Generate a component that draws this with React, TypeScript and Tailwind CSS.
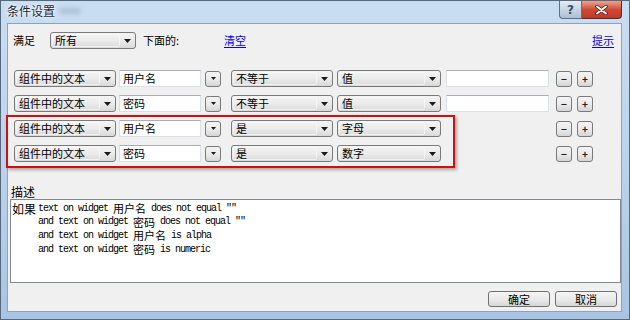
import React from "react";

const ui = "font-['Noto_Sans_CJK_SC','Liberation_Sans',sans-serif]";

const Arrow = ({ small }: { small?: boolean }) => (
  <svg width={small ? 5 : 7} height={small ? 3 : 4} viewBox="0 0 7 4" className="shrink-0">
    <path d="M0 0h7L3.5 4z" fill="#1a1a1a" />
  </svg>
);

const Combo = ({ text, w }: { text: string; w: string }) => (
  <div
    className={`${w} h-[17px] shrink-0 rounded-[3px] border border-[#7a7a7a] bg-gradient-to-b from-[#f4f4f4] via-[#ebebeb] to-[#d9d9d9] p-[1px] flex items-center`}
  >
    <div className="flex-1 h-full rounded-[2px] border border-[#fafafa]/70 flex items-center pl-[2px] text-[11px] leading-none text-black">
      {text}
    </div>
    <div className="w-[14px] flex justify-center">
      <Arrow />
    </div>
  </div>
);

const TextBox = ({ text, w }: { text?: string; w: string }) => (
  <div
    className={`${w} h-[17px] shrink-0 bg-white border border-[#dbdfe6] border-t-[#abadb3] flex items-center pl-[3px] text-[11px] leading-none text-black`}
  >
    {text}
  </div>
);

const SmallBtn = ({ children, w = "w-[16px]" }: { children: React.ReactNode; w?: string }) => (
  <div
    className={`${w} h-[16px] shrink-0 rounded-[3px] border border-[#7a7a7a] bg-gradient-to-b from-[#f4f4f4] via-[#ebebeb] to-[#d5d5d5] flex items-center justify-center text-[10px] font-bold leading-none text-[#222]`}
  >
    {children}
  </div>
);

const rows = [
  { field: "用户名", op: "不等于", val: "值", input: true },
  { field: "密码", op: "不等于", val: "值", input: true },
  { field: "用户名", op: "是", val: "字母", input: false },
  { field: "密码", op: "是", val: "数字", input: false },
];

const descLines = [
  ["text on widget", "用户名", 'does not equal ""'],
  ["and text on widget", "密码", 'does not equal ""'],
  ["and text on widget", "用户名", "is alpha"],
  ["and text on widget", "密码", "is numeric"],
];

const mono = "font-['Liberation_Mono',monospace] text-[10px] tracking-[-1px] leading-none";

export default function App() {
  return (
    <div className={`${ui} relative w-[630px] h-[320px] overflow-hidden flex flex-col bg-gradient-to-b from-[#c9ddf2] via-[#bcd3ec] to-[#a9c4e3] border border-[#58687c]`}>
      {/* title bar */}
      <div className="h-[22px] shrink-0 flex items-start">
        <div className="pl-[6px] pt-[3px] text-[12px] leading-[14px] text-[#1c2a3a] [text-shadow:0_0_6px_#ffffff,0_0_3px_#ffffff]">
          条件设置
        </div>
        <div className="mt-[7px] ml-[4px] w-[22px] h-[6px] rounded-full bg-[#9fb2c6]/60 blur-[2px]" />
        <div className="flex-1" />
        <div className="w-[23px] h-[18px] rounded-bl-[4px] border border-t-0 border-[#5d6f85] bg-gradient-to-b from-[#e3ecf5] via-[#c6d5e4] to-[#aebfd2] flex items-center justify-center text-[12px] font-bold leading-none text-[#3c4d63] font-['DejaVu_Sans',sans-serif]">
          ?
        </div>
        <div className="w-[40px] h-[18px] mr-[7px] rounded-br-[4px] border border-t-0 border-l-0 border-[#5d2a22] bg-gradient-to-b from-[#e8a493] via-[#cf4a33] to-[#c0392b] flex items-center justify-center">
          <svg width="13" height="10" viewBox="0 0 13 10">
            <path d="M2 1.5l9 7M11 1.5l-9 7" stroke="#3a1a14" strokeWidth="3.4" strokeLinecap="round" />
            <path d="M2 1.5l9 7M11 1.5l-9 7" stroke="#ffffff" strokeWidth="2" strokeLinecap="round" />
          </svg>
        </div>
      </div>

      {/* client area */}
      <div className="flex-1 ml-[6px] mr-[7px] mb-[7px] border border-[#8ea3bb] bg-[#f0f0f0] flex flex-col">
        {/* header row */}
        <div className="mt-[8px] h-[17px] flex items-center text-[11px] leading-none text-black">
          <span className="ml-[5px] w-[37px]">满足</span>
          <Combo text="所有" w="w-[86px]" />
          <span className="ml-[7px] w-[81px]">下面的:</span>
          <span className="text-[#0000ee] underline underline-offset-2">清空</span>
          <div className="flex-1" />
          <span className="mr-[7px] text-[#0000ee] underline underline-offset-2">提示</span>
        </div>

        {/* condition rows */}
        <div className="mt-[21px] ml-[6px] flex flex-col gap-[8px]">
          {rows.map((r, i) => (
            <div key={i} className="h-[17px] flex items-center">
              <Combo text="组件中的文本" w="w-[102px]" />
              <div className="w-[3px]" />
              <TextBox text={r.field} w="w-[82px]" />
              <div className="w-[4px]" />
              <SmallBtn>
                <Arrow small />
              </SmallBtn>
              <div className="w-[10px]" />
              <Combo text={r.op} w="w-[102px]" />
              <div className="w-[4px]" />
              <Combo text={r.val} w="w-[104px]" />
              <div className="w-[5px]" />
              {r.input ? <TextBox w="w-[103px]" /> : <div className="w-[103px] shrink-0" />}
              <div className="w-[7px]" />
              <SmallBtn>−</SmallBtn>
              <div className="w-[5px]" />
              <SmallBtn>+</SmallBtn>
            </div>
          ))}
        </div>

        {/* description */}
        <div className="mt-[23px] ml-[3px] text-[12px] leading-[13px] text-black">描述</div>
        <div className="mt-[1px] ml-[2px] h-[84px] border border-[#828790] bg-white flex items-start pt-[2px] pl-[1px]">
          <div className="w-[26px] h-[13.6px] shrink-0 flex items-center text-[12px] leading-none text-black">如果</div>
          <div className="flex flex-col">
            {descLines.map(([a, b, c], i) => (
              <div key={i} className="h-[13.6px] flex items-center gap-[5px] whitespace-pre text-black">
                <span className={mono}>{a}</span>
                <span className="text-[11px] leading-none">{b}</span>
                <span className={mono}>{c}</span>
              </div>
            ))}
          </div>
        </div>

        {/* buttons */}
        <div className="mt-[8px] flex justify-end gap-[5px] mr-[4px]">
          {["确定", "取消"].map((t) => (
            <div
              key={t}
              className="w-[62px] h-[16px] rounded-[3px] border border-[#707070] bg-gradient-to-b from-[#f4f4f4] via-[#ebebeb] to-[#d6d6d6] flex items-center justify-center text-[11px] leading-none text-black"
            >
              {t}
            </div>
          ))}
        </div>
      </div>

      {/* highlight annotation */}
      <div className="absolute left-[5px] top-[114px] w-[449px] h-[53px] border-2 border-[#d01010] shadow-[2px_2px_3px_rgba(0,0,0,0.3)] pointer-events-none" />
    </div>
  );
}
